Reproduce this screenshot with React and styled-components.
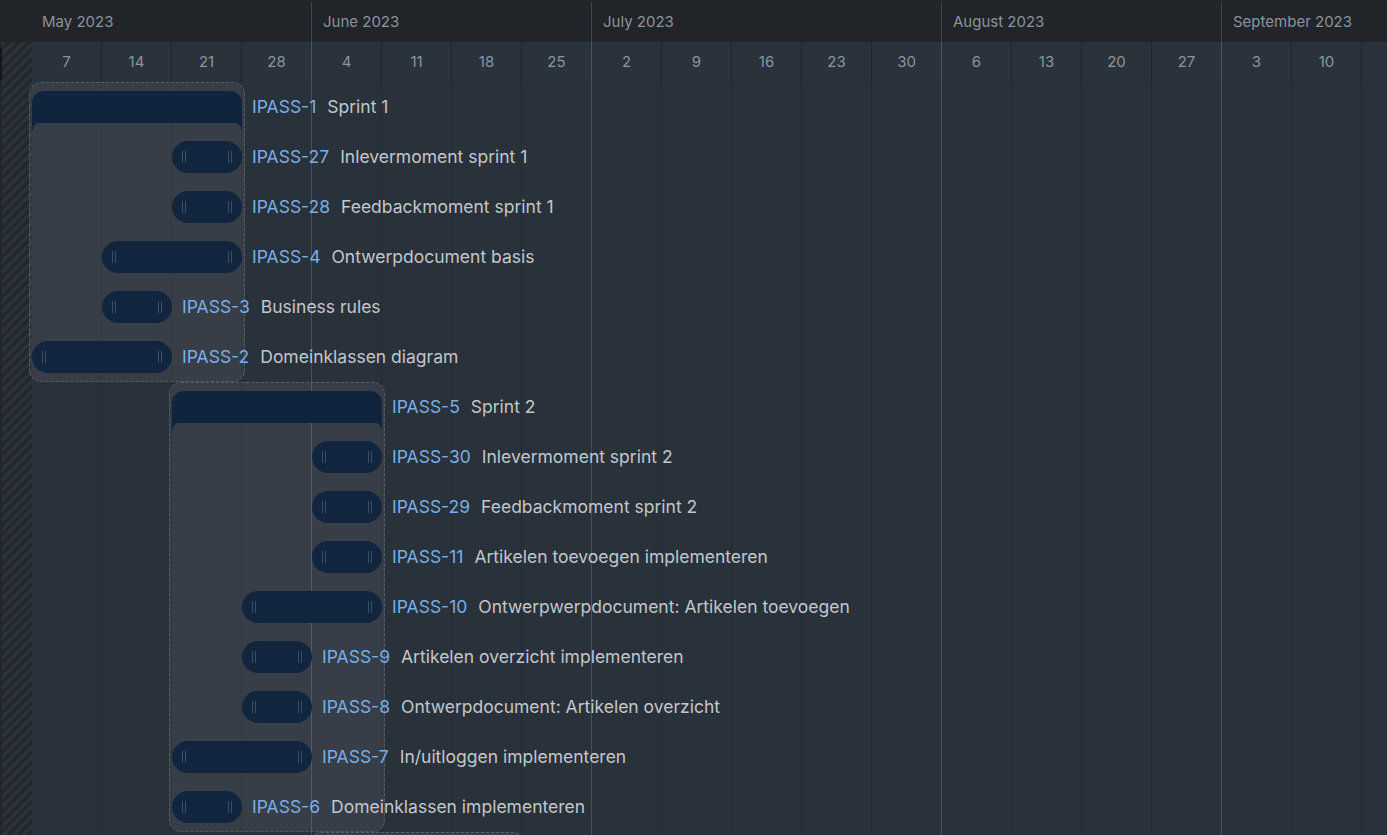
import React from "react";
import styled, { createGlobalStyle } from "styled-components";

const DAY = 10;
const WEEK = 70;
const LEAD = 32;

const months = [
  { name: "May 2023", weeks: 4 },
  { name: "June 2023", weeks: 4 },
  { name: "July 2023", weeks: 5 },
  { name: "August 2023", weeks: 4 },
  { name: "September 2023", weeks: 3 },
];

// monthEnd marks the last week before a new month starts
const weeks = [
  { day: 7 }, { day: 14 }, { day: 21 }, { day: 28, monthEnd: true },
  { day: 4 }, { day: 11 }, { day: 18 }, { day: 25, monthEnd: true },
  { day: 2 }, { day: 9 }, { day: 16 }, { day: 23 }, { day: 30, monthEnd: true },
  { day: 6 }, { day: 13 }, { day: 20 }, { day: 27, monthEnd: true },
  { day: 3 }, { day: 10 }, { day: null },
];

const sprints = [
  {
    start: 0,
    days: 21,
    rows: [
      { id: "IPASS-1", name: "Sprint 1", start: 0, days: 21, summary: true },
      { id: "IPASS-27", name: "Inlevermoment sprint 1", start: 14, days: 7 },
      { id: "IPASS-28", name: "Feedbackmoment sprint 1", start: 14, days: 7 },
      { id: "IPASS-4", name: "Ontwerpdocument basis", start: 7, days: 14 },
      { id: "IPASS-3", name: "Business rules", start: 7, days: 7 },
      { id: "IPASS-2", name: "Domeinklassen diagram", start: 0, days: 14 },
    ],
  },
  {
    start: 14,
    days: 21,
    rows: [
      { id: "IPASS-5", name: "Sprint 2", start: 14, days: 21, summary: true },
      { id: "IPASS-30", name: "Inlevermoment sprint 2", start: 28, days: 7 },
      { id: "IPASS-29", name: "Feedbackmoment sprint 2", start: 28, days: 7 },
      { id: "IPASS-11", name: "Artikelen toevoegen implementeren", start: 28, days: 7 },
      { id: "IPASS-10", name: "Ontwerpwerpdocument: Artikelen toevoegen", start: 21, days: 14 },
      { id: "IPASS-9", name: "Artikelen overzicht implementeren", start: 21, days: 7 },
      { id: "IPASS-8", name: "Ontwerpdocument: Artikelen overzicht", start: 21, days: 7 },
      { id: "IPASS-7", name: "In/uitloggen implementeren", start: 14, days: 14 },
      { id: "IPASS-6", name: "Domeinklassen implementeren", start: 14, days: 7 },
    ],
  },
  {
    start: 28,
    days: 21,
    rows: [{ start: 28, days: 21, summary: true }],
  },
];

const GlobalStyle = createGlobalStyle`
  html, body {
    margin: 0;
    padding: 0;
    background: #29313a;
  }
  body {
    font-family: Inter, "Noto Sans", "Liberation Sans", sans-serif;
    -webkit-font-smoothing: antialiased;
  }
`;

const Page = styled.div`
  width: 1387px;
  height: 835px;
  overflow: hidden;
  display: flex;
  flex-direction: column;
  background: #29313a;
`;

const MonthBar = styled.div`
  display: flex;
  flex-shrink: 0;
  height: 42px;
  padding-left: ${LEAD - 1}px;
  background: #212428;
`;

const MonthCell = styled.div`
  flex-shrink: 0;
  box-sizing: border-box;
  margin-top: 2px;
  padding: 0 0 2px ${(p) => (p.$first ? 10 : 11)}px;
  display: flex;
  align-items: center;
  border-left: 1px solid ${(p) => (p.$first ? "transparent" : "#3e454d")};
  color: #8b939b;
  font-size: 15px;
  white-space: nowrap;
`;

const Chart = styled.div`
  flex: 1;
  display: grid;
  grid-template-columns: max-content;
  grid-template-rows: 40px 1fr;
`;

const ColumnStrip = styled.div`
  grid-row: 1 / 3;
  grid-column: 1;
  display: flex;
`;

const Hatch = styled.div`
  flex-shrink: 0;
  width: ${LEAD}px;
  box-sizing: border-box;
  border-left: 2px solid #24272a;
  background: repeating-linear-gradient(
    135deg,
    #2c3239 0 3.5px,
    #25282b 3.5px 7px
  );
  display: flex;
  flex-direction: column;
`;

const Splitter = styled.div`
  height: 32px;
  margin: 6px 0 0 -2px;
  width: 2px;
  background: #141618;
`;

const WeekColumn = styled.div`
  flex-shrink: 0;
  width: ${WEEK}px;
  display: flex;
  flex-direction: column;
`;

const WeekLabel = styled.div`
  height: 40px;
  display: flex;
  align-items: center;
  justify-content: center;
  box-sizing: border-box;
  border-right: 1px solid ${(p) => (p.$month ? "#4a525b" : "#1f252b")};
  background: #2a323b;
  color: #8b959f;
  font-size: 15px;
  padding-bottom: 1px;
`;

const WeekBody = styled.div`
  flex: 1;
  box-sizing: border-box;
  border-right: 1px solid ${(p) => (p.$month ? "#474f58" : "#232a31")};
`;

const TaskLayer = styled.div`
  grid-row: 2;
  grid-column: 1;
  padding-left: ${LEAD}px;
  display: flex;
  flex-direction: column;
  align-items: flex-start;
  min-width: 0;
`;

const Group = styled.div`
  box-sizing: border-box;
  border: 1px dashed #545b64;
  border-radius: 12px;
  background: rgba(255, 255, 255, 0.065);
`;

const RowList = styled.div`
  margin: -1px;
  display: flex;
  flex-direction: column;
`;

const Row = styled.div`
  height: 50px;
  box-sizing: border-box;
  padding-top: 9px;
  display: flex;
  align-items: flex-start;
  white-space: nowrap;
`;

const SprintBar = styled.div`
  position: relative;
  flex-shrink: 0;
  height: 32px;
  background: #11243d;
  border-radius: 12px 12px 0 0;

  &::before,
  &::after {
    content: "";
    position: absolute;
    top: 100%;
    width: 8px;
    height: 7px;
  }
  &::before {
    left: 0;
    background: radial-gradient(circle at 100% 100%, transparent 7px, #11243d 7.6px);
  }
  &::after {
    right: 0;
    background: radial-gradient(circle at 0 100%, transparent 7px, #11243d 7.6px);
  }
`;

const TaskBar = styled.div`
  flex-shrink: 0;
  height: 32px;
  box-sizing: border-box;
  padding: 0 10px;
  border-radius: 16px;
  background: #12253e;
  display: flex;
  align-items: center;
  justify-content: space-between;
`;

const Handle = styled.span`
  width: 2px;
  height: 12px;
  border-left: 1px solid #3e4e64;
  border-right: 1px solid #3e4e64;
`;

const Label = styled.div`
  margin-left: 10px;
  height: 32px;
  box-sizing: border-box;
  padding-bottom: 2px;
  display: flex;
  align-items: center;
  gap: 11px;
  font-size: 17.5px;
`;

const TaskId = styled.span`
  color: #78aee6;
`;

const TaskName = styled.span`
  color: #c3c7cc;
`;

const TaskRow = ({ task, groupStart }) => {
  const style = {
    marginLeft: (task.start - groupStart) * DAY + 3,
    width: task.days * DAY,
  };
  return (
    <Row>
      {task.summary ? (
        <SprintBar style={style} />
      ) : (
        <TaskBar style={style}>
          <Handle />
          <Handle />
        </TaskBar>
      )}
      {task.id && (
        <Label>
          <TaskId>{task.id}</TaskId>
          <TaskName>{task.name}</TaskName>
        </Label>
      )}
    </Row>
  );
};

const App = () => {
  return (
    <Page>
      <GlobalStyle />
      <MonthBar>
        {months.map((m, i) => (
          <MonthCell key={m.name} $first={i === 0} style={{ width: m.weeks * WEEK }}>
            {m.name}
          </MonthCell>
        ))}
      </MonthBar>
      <Chart>
        <ColumnStrip>
          <Hatch>
            <Splitter />
          </Hatch>
          {weeks.map((w, i) => (
            <WeekColumn key={i}>
              <WeekLabel $month={w.monthEnd}>{w.day}</WeekLabel>
              <WeekBody $month={w.monthEnd} />
            </WeekColumn>
          ))}
        </ColumnStrip>
        <TaskLayer>
          {sprints.map((s, i) => (
            <Group
              key={i}
              style={{ marginLeft: s.start * DAY - 3, width: s.days * DAY + 6 }}
            >
              <RowList>
                {s.rows.map((t, j) => (
                  <TaskRow key={j} task={t} groupStart={s.start} />
                ))}
              </RowList>
            </Group>
          ))}
        </TaskLayer>
      </Chart>
    </Page>
  );
};

export default App;
